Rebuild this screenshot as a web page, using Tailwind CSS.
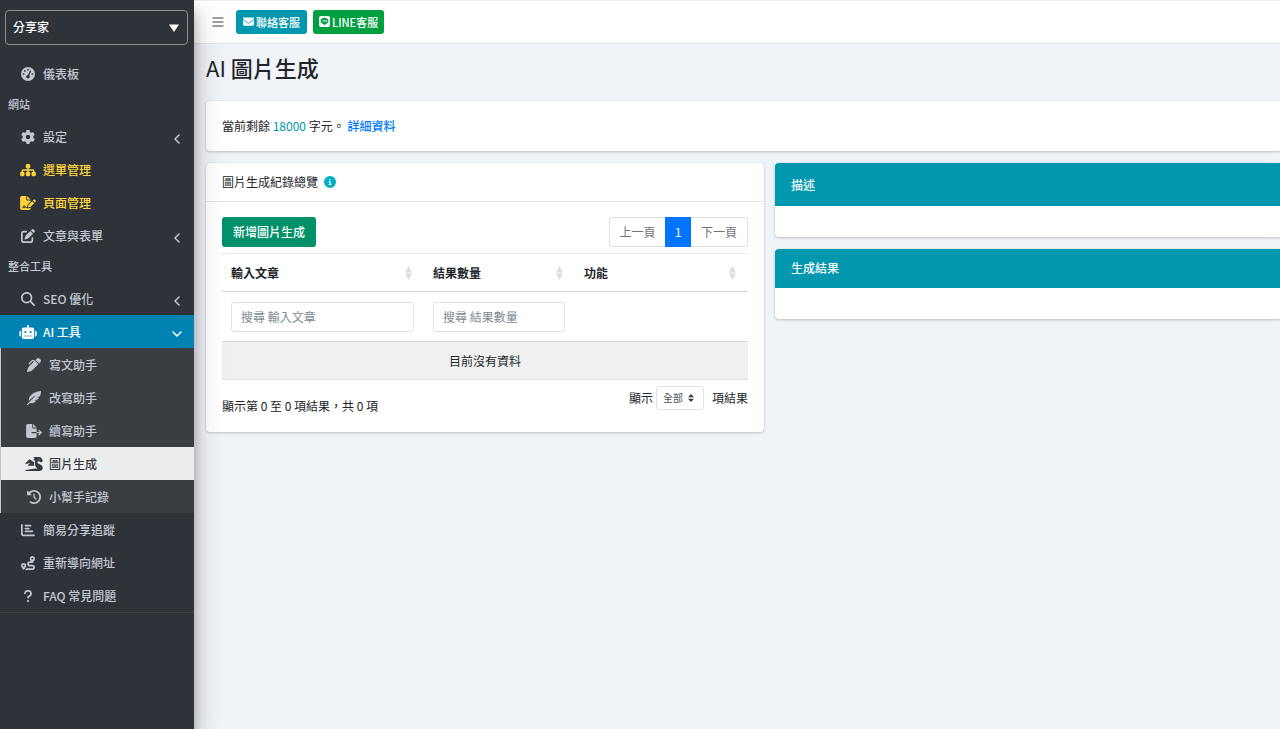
<!DOCTYPE html>
<html lang="zh-Hant">
<head>
<meta charset="utf-8">
<meta name="viewport" content="width=device-width, initial-scale=1">
<title>AI 圖片生成</title>
<script src="https://cdn.jsdelivr.net/npm/@tailwindcss/browser@4"></script>
</head>
<body class="flex min-h-screen overflow-x-hidden bg-[#f0f3f8] font-['Noto_Sans_CJK_TC',sans-serif] text-[12px] leading-5 text-[#212529]">

<!-- Sidebar -->
<aside class="relative z-10 w-[194px] shrink-0 bg-[#2e333a] font-medium text-[#c2c7d0] shadow-[0_14px_28px_rgba(0,0,0,0.25),0_10px_10px_rgba(0,0,0,0.22)]">
  <div class="pt-[10px] pr-[6px] pb-3 pl-[5px]">
    <button type="button" class="flex h-[35px] w-full items-center justify-between rounded border border-[#8a8e93] pr-2 pb-px pl-[7px] font-medium text-white">
      <span>分享家</span>
      <svg class="mt-[2px] h-2 w-[10px]" viewBox="0 0 10 8" fill="currentColor"><path d="M0 0.500h10L5 8z"/></svg>
    </button>
  </div>
  <nav class="border-b border-[#3d4247]">
    <a href="#" class="flex h-[33px] items-center gap-[7px] pr-3 pl-5">
      <svg class="h-[14px] w-4" viewBox="0 0 512 512" fill="currentColor"><path d="M0 256a256 256 0 1 1 512 0A256 256 0 1 1 0 256zM288 96a32 32 0 1 0 -64 0 32 32 0 1 0 64 0zM256 416c35.3 0 64-28.7 64-64c0-17.4-6.9-33.1-18.1-44.6L366 161.7c5.3-12.1-.2-26.3-12.3-31.6s-26.3 .2-31.6 12.3L257.9 288c-.6 0-1.3 0-1.9 0c-35.3 0-64 28.7-64 64s28.7 64 64 64zM176 144a32 32 0 1 0 -64 0 32 32 0 1 0 64 0zM96 288a32 32 0 1 0 0-64 32 32 0 1 0 0 64zm352-32a32 32 0 1 0 -64 0 32 32 0 1 0 64 0z"/></svg>
      <span>儀表板</span>
    </a>
    <h2 class="flex h-[30px] items-center pb-[2px] pl-2 text-[11px]">網站</h2>
    <a href="#" class="flex h-[33px] items-center gap-[7px] pr-3 pl-5">
      <svg class="h-[14px] w-4" viewBox="0 0 512 512" fill="currentColor"><path d="M495.9 166.6c3.2 8.7 .5 18.4-6.4 24.6l-43.3 39.4c1.1 8.3 1.7 16.8 1.7 25.4s-.6 17.1-1.7 25.4l43.3 39.4c6.9 6.2 9.6 15.9 6.4 24.6c-4.4 11.9-9.7 23.3-15.8 34.3l-4.7 8.1c-6.6 11-14 21.4-22.1 31.2c-5.9 7.2-15.7 9.6-24.5 6.8l-55.7-17.7c-13.4 10.3-28.2 18.9-44 25.4l-12.5 57.1c-2 9.1-9 16.3-18.2 17.8c-13.8 2.3-28 3.5-42.5 3.5s-28.7-1.2-42.5-3.5c-9.2-1.5-16.2-8.7-18.2-17.8l-12.5-57.1c-15.8-6.5-30.6-15.1-44-25.4L83.1 425.9c-8.8 2.8-18.6 .3-24.5-6.8c-8.1-9.8-15.5-20.2-22.1-31.2l-4.7-8.1c-6.1-11-11.4-22.4-15.8-34.3c-3.2-8.7-.5-18.4 6.4-24.6l43.3-39.4C64.6 273.1 64 264.6 64 256s.6-17.1 1.7-25.4L22.4 191.2c-6.9-6.2-9.6-15.9-6.4-24.6c4.4-11.9 9.7-23.3 15.8-34.3l4.7-8.1c6.6-11 14-21.4 22.1-31.2c5.9-7.2 15.7-9.6 24.5-6.8l55.7 17.7c13.4-10.3 28.2-18.9 44-25.4l12.5-57.1c2-9.1 9-16.3 18.2-17.8C227.3 1.2 241.5 0 256 0s28.7 1.2 42.5 3.5c9.2 1.5 16.2 8.7 18.2 17.8l12.5 57.1c15.8 6.5 30.6 15.1 44 25.4l55.7-17.7c8.8-2.8 18.6-.3 24.5 6.8c8.1 9.8 15.5 20.2 22.1 31.2l4.7 8.1c6.1 11 11.4 22.4 15.8 34.3zM256 336a80 80 0 1 0 0-160 80 80 0 1 0 0 160z"/></svg>
      <span>設定</span>
      <svg class="mt-1 ml-auto h-[10px] w-[10px]" viewBox="0 0 10 10" fill="none" stroke="currentColor" stroke-width="1.5" stroke-linecap="round" stroke-linejoin="round"><path d="M7 1L3 5l4 4"/></svg>
    </a>
    <a href="#" class="flex h-[33px] items-center gap-[7px] pr-3 pl-5 text-[#ffd43b]">
      <svg class="h-[14px] w-4" viewBox="0 0 576 512" fill="currentColor"><path d="M208 80c0-26.5 21.5-48 48-48h64c26.5 0 48 21.5 48 48v64c0 26.5-21.5 48-48 48h-8v40h152c30.9 0 56 25.1 56 56v32h8c26.5 0 48 21.5 48 48v64c0 26.5-21.5 48-48 48h-64c-26.5 0-48-21.5-48-48v-64c0-26.5 21.5-48 48-48h8v-32c0-4.4-3.6-8-8-8H312v40h8c26.5 0 48 21.5 48 48v64c0 26.5-21.5 48-48 48h-64c-26.5 0-48-21.5-48-48v-64c0-26.5 21.5-48 48-48h8v-40H112c-4.4 0-8 3.6-8 8v32h8c26.5 0 48 21.5 48 48v64c0 26.5-21.5 48-48 48H48c-26.5 0-48-21.5-48-48v-64c0-26.5 21.5-48 48-48h8v-32c0-30.9 25.1-56 56-56h152v-40h-8c-26.5 0-48-21.5-48-48V80z"/></svg>
      <span>選單管理</span>
    </a>
    <a href="#" class="flex h-[33px] items-center gap-[7px] pr-3 pl-5 text-[#ffd43b]">
      <svg class="h-[14px] w-4" viewBox="0 0 576 512" fill="currentColor"><path d="M64 0C28.7 0 0 28.7 0 64v384c0 35.3 28.7 64 64 64h256c35.3 0 64-28.7 64-64v-19.3c-2.7 1.1-5.4 2-8.2 2.7l-60.1 15c-3 .7-6 1.2-9 1.4-.9 .1-1.8 .2-2.7 .2h-64c-6.1 0-11.6-3.4-14.3-8.8l-8.800-17.7c-1.700-3.4-5.100-5.500-8.800-5.500s-7.200 2.100-8.800 5.500l-8.800 17.7c-2.900 5.900-9.200 9.400-15.7 8.800s-12.100-5.100-13.9-11.300L144 381l-9.800 32.8c-6.100 20.300-24.8 34.200-46 34.200H80c-8.800 0-16-7.200-16-16s7.200-16 16-16h8.200c7.100 0 13.3-4.6 15.3-11.4l14.9-49.5c3.4-11.3 13.8-19.1 25.6-19.1s22.2 7.8 25.6 19.1l11.6 38.6c7.4-6.2 16.8-9.7 26.8-9.7 15.9 0 30.4 9 37.5 23.2l4.4 8.800h8.900c-3.100-8.800-3.700-18.400-1.400-27.8l15-60.1c2.800-11.3 8.600-21.5 16.8-29.7L384 203.6V160H256c-17.7 0-32-14.3-32-32V0H64zm192 0v128h128L256 0zm293.8 139.7c-15.6-15.6-40.9-15.6-56.6 0l-29.4 29.4 71 71 29.4-29.4c15.6-15.6 15.6-40.9 0-56.6l-14.4-14.4zM311.9 321c-4.100 4.100-7 9.200-8.400 14.9l-15 60.1c-1.400 5.500 .2 11.2 4.200 15.2s9.700 5.600 15.2 4.200l60.1-15c5.600-1.400 10.8-4.300 14.9-8.400l129.2-129.3-71-71L311.9 321z"/></svg>
      <span>頁面管理</span>
    </a>
    <a href="#" class="flex h-[33px] items-center gap-[7px] pr-3 pl-5">
      <svg class="h-[14px] w-4" viewBox="0 0 512 512" fill="currentColor"><path d="M471.6 21.7c-21.9-21.9-57.3-21.9-79.2 0L362.3 51.7l97.9 97.9 30.1-30.1c21.9-21.9 21.9-57.3 0-79.2L471.6 21.7zm-299.2 220c-6.1 6.1-10.8 13.6-13.5 21.9l-29.6 88.8c-2.9 8.6-.6 18.1 5.8 24.6s15.9 8.7 24.6 5.8l88.8-29.6c8.2-2.7 15.7-7.4 21.9-13.5L437.7 172.3 339.7 74.3 172.4 241.7zM96 64C43 64 0 107 0 160V416c0 53 43 96 96 96H352c53 0 96-43 96-96V320c0-17.7-14.3-32-32-32s-32 14.3-32 32v96c0 17.7-14.3 32-32 32H96c-17.7 0-32-14.3-32-32V160c0-17.7 14.3-32 32-32h96c17.7 0 32-14.3 32-32s-14.3-32-32-32H96z"/></svg>
      <span>文章與表單</span>
      <svg class="mt-1 ml-auto h-[10px] w-[10px]" viewBox="0 0 10 10" fill="none" stroke="currentColor" stroke-width="1.5" stroke-linecap="round" stroke-linejoin="round"><path d="M7 1L3 5l4 4"/></svg>
    </a>
    <h2 class="flex h-[30px] items-center pb-[2px] pl-2 text-[11px]">整合工具</h2>
    <a href="#" class="flex h-[33px] items-center gap-[7px] pr-3 pl-5">
      <svg class="h-[14px] w-4" viewBox="0 0 512 512" fill="currentColor"><path d="M416 208c0 45.9-14.9 88.3-40 122.7L502.6 457.4c12.5 12.5 12.5 32.8 0 45.3s-32.8 12.5-45.3 0L330.7 376c-34.4 25.2-76.8 40-122.7 40C93.1 416 0 322.9 0 208S93.1 0 208 0S416 93.1 416 208zM208 352a144 144 0 1 0 0-288 144 144 0 1 0 0 288z"/></svg>
      <span>SEO 優化</span>
      <svg class="mt-1 ml-auto h-[10px] w-[10px]" viewBox="0 0 10 10" fill="none" stroke="currentColor" stroke-width="1.5" stroke-linecap="round" stroke-linejoin="round"><path d="M7 1L3 5l4 4"/></svg>
    </a>
    <a href="#" class="flex h-[33px] items-center gap-[7px] bg-[#0083b3] pr-3 pl-5 text-white">
      <svg class="h-[14px] w-4 scale-110" viewBox="0 0 640 512" fill="currentColor"><path d="M320 0c17.7 0 32 14.3 32 32V96H472c39.8 0 72 32.2 72 72V440c0 39.8-32.2 72-72 72H168c-39.8 0-72-32.2-72-72V168c0-39.8 32.2-72 72-72H288V32c0-17.7 14.3-32 32-32zM208 384c-8.8 0-16 7.2-16 16s7.2 16 16 16h32c8.8 0 16-7.2 16-16s-7.2-16-16-16H208zm96 0c-8.8 0-16 7.2-16 16s7.2 16 16 16h32c8.8 0 16-7.2 16-16s-7.2-16-16-16H304zm96 0c-8.8 0-16 7.2-16 16s7.2 16 16 16h32c8.8 0 16-7.2 16-16s-7.2-16-16-16H400zM264 256a40 40 0 1 0 -80 0 40 40 0 1 0 80 0zm152 40a40 40 0 1 0 0-80 40 40 0 1 0 0 80zM48 224H64V416H48c-26.5 0-48-21.5-48-48V272c0-26.5 21.5-48 48-48zm544 0c26.5 0 48 21.5 48 48v96c0 26.5-21.5 48-48 48H576V224h16z"/></svg>
      <span>AI 工具</span>
      <svg class="mt-1 ml-auto h-[10px] w-[10px]" viewBox="0 0 10 10" fill="none" stroke="currentColor" stroke-width="1.5" stroke-linecap="round" stroke-linejoin="round"><path d="M1 3l4 4 4-4"/></svg>
    </a>
    <div class="border-l border-[#c2c7d0] bg-[#393e42]">
      <a href="#" class="flex h-[33px] items-center gap-[7px] pl-[25px]">
        <svg class="h-[14px] w-4" viewBox="0 0 512 512" fill="currentColor"><path d="M453.3 19.3l39.4 39.4c25 25 25 65.5 0 90.5l-52.1 52.1-17-17-96-96-17-17 52.1-52.1c25-25 65.5-25 90.5 0zM241 114.9c-9.4-9.4-24.6-9.4-33.9 0L105 217c-9.4 9.4-24.6 9.4-33.9 0s-9.4-24.6 0-33.9L173.1 81c28.1-28.1 73.7-28.1 101.8 0L288 94.1l17 17 96 96 17 17-17 17L229.5 412.5c-48 48-109.2 80.8-175.8 94.1l-25 5c-7.9 1.6-16-.9-21.7-6.6s-8.1-13.8-6.6-21.7l5-25c13.3-66.6 46.1-127.8 94.1-175.8L254.1 128 241 114.9z"/></svg>
        <span>寫文助手</span>
      </a>
      <a href="#" class="flex h-[33px] items-center gap-[7px] pl-[25px]">
        <svg class="h-[14px] w-4" viewBox="0 0 512 512" fill="currentColor"><path d="M512 0C460.200 3.600 264.500 31 144 151.200 61.100 234 64.200 323.300 65.500 356.200L253.600 189.800c6.500-5.800 16.500-5.200 22.200 1.300 5.400 6.100 5.200 15.300-.4 21.200L7 471c-9.400 9.400-9.400 24.600 0 33.900 9.400 9.400 24.600 9.400 33.900 0l62-62c51.200 10.500 125.100 7.100 190.500-40.300L352 352h-90l150-58c12-14 24-31 34-50l-86-4 112-44C505 112 511 38 512 0z"/></svg>
        <span>改寫助手</span>
      </a>
      <a href="#" class="flex h-[33px] items-center gap-[7px] pl-[25px]">
        <svg class="h-[14px] w-4" viewBox="0 0 576 512" fill="currentColor"><path d="M0 64C0 28.7 28.7 0 64 0H224V128c0 17.7 14.3 32 32 32H384V288H216c-13.3 0-24 10.7-24 24s10.7 24 24 24H384V448c0 35.3-28.7 64-64 64H64c-35.3 0-64-28.7-64-64V64zM384 336V288H494.1l-39-39c-9.4-9.4-9.4-24.6 0-33.9s24.6-9.4 33.9 0l80 80c9.4 9.4 9.4 24.6 0 33.9l-80 80c-9.4 9.4-24.6 9.4-33.9 0s-9.4-24.6 0-33.9l39-39H384zm0-208H256V0L384 128z"/></svg>
        <span>續寫助手</span>
      </a>
      <a href="#" class="flex h-[33px] items-center gap-[7px] bg-[#ebeced] pl-[25px] text-[#343a40]">
        <svg class="h-[14px] w-4 scale-110" viewBox="0 0 640 512" fill="currentColor"><path d="M18.32 255.78L192 223.96l-91.28 68.69c-10.08 10.08-2.94 27.31 11.31 27.31h222.7c-9.44-26.4-14.73-54.47-14.73-83.38v-42.27l-119.73-87.6c-23.82-15.88-55.29-14.01-77.06 4.59L5.81 227.64c-12.38 10.33-3.45 30.42 12.51 28.14zm556.87 34.1l-100.66-50.31A47.992 47.992 0 0 1 448 196.65v-36.69h64l28.09 22.63c6 6 14.14 9.37 22.63 9.37h30.97a32 32 0 0 0 28.62-17.69l14.31-28.62a32.005 32.005 0 0 0-3.02-33.51l-74.53-99.38C553.02 4.7 543.54 0 533.47 0H296.02c-7.13 0-10.7 8.57-5.66 13.61L352 63.96 292.42 88.8c-5.9 2.95-5.9 11.36 0 14.31L352 127.96v108.62c0 72.08 36.03 139.39 96 179.38-195.59 6.81-344.56 41.01-434.1 60.91C5.78 478.67 0 485.88 0 494.2 0 504 7.95 512 17.76 512h499.08c63.29.01 119.61-47.56 122.99-110.76 2.52-47.28-22.73-90.4-64.64-111.36zM489.18 66.25l45.65 11.41c-2.75 10.91-12.47 18.89-24.13 18.26-12.96-.71-25.85-12.53-21.52-29.67z"/></svg>
        <span>圖片生成</span>
      </a>
      <a href="#" class="flex h-[33px] items-center gap-[7px] pl-[25px]">
        <svg class="h-[14px] w-4" viewBox="0 0 512 512" fill="currentColor"><path d="M75 75L41 41C25.9 25.9 0 36.6 0 57.9V168c0 13.3 10.7 24 24 24H134.1c21.4 0 32.1-25.9 17-41l-30.8-30.8C155 85.5 203 64 256 64c106 0 192 86 192 192s-86 192-192 192c-40.8 0-78.6-12.7-109.7-34.4c-14.5-10.1-34.4-6.6-44.6 7.9s-6.6 34.4 7.9 44.6C151.2 495 201.7 512 256 512c141.4 0 256-114.6 256-256S397.4 0 256 0C185.3 0 121.3 28.7 75 75zm181 53c-13.3 0-24 10.7-24 24V256c0 6.4 2.5 12.5 7 17l72 72c9.4 9.4 24.6 9.4 33.9 0s9.4-24.6 0-33.9l-65-65V152c0-13.3-10.7-24-24-24z"/></svg>
        <span>小幫手記錄</span>
      </a>
    </div>
    <a href="#" class="flex h-[33px] items-center gap-[7px] pr-3 pl-5">
      <svg class="h-[14px] w-4" viewBox="0 0 512 512" fill="currentColor"><path d="M32 32c17.7 0 32 14.3 32 32V400c0 8.8 7.2 16 16 16H480c17.7 0 32 14.3 32 32s-14.3 32-32 32H80c-44.2 0-80-35.8-80-80V64C0 46.3 14.3 32 32 32zm96 64c0-17.7 14.3-32 32-32l192 0c17.7 0 32 14.3 32 32s-14.3 32-32 32l-192 0c-17.7 0-32-14.3-32-32zm32 74H288c17.7 0 32 14.3 32 32s-14.3 32-32 32H160c-17.7 0-32-14.3-32-32s14.3-32 32-32zm0 108H416c17.7 0 32 14.3 32 32s-14.3 32-32 32H160c-17.7 0-32-14.3-32-32s14.3-32 32-32z"/></svg>
      <span>簡易分享追蹤</span>
    </a>
    <a href="#" class="flex h-[33px] items-center gap-[7px] pr-3 pl-5">
      <svg class="h-[14px] w-4" viewBox="0 0 512 512" fill="currentColor"><path d="M512 96c0 50.2-59.1 125.1-84.6 155c-3.8 4.4-9.4 6.1-14.5 5H320c-17.7 0-32 14.3-32 32s14.3 32 32 32h96c53 0 96 43 96 96s-43 96-96 96H139.6c8.7-9.9 19.3-22.6 30-36.8c6.3-8.4 12.8-17.6 19-27.2H416c17.7 0 32-14.3 32-32s-14.3-32-32-32H320c-53 0-96-43-96-96s43-96 96-96h39.8c-21-31.5-39.8-67.7-39.8-96c0-53 43-96 96-96s96 43 96 96zM117.1 489.1c-3.8 4.3-7.2 8.1-10.1 11.3l-1.8 2-.2-.2c-6 4.6-14.6 4-20-1.8C59.8 473 0 402.5 0 352c0-53 43-96 96-96s96 43 96 96c0 30-21.1 67-43.5 97.9c-10.7 14.7-21.7 28-30.8 38.5l-.6 .7zM128 352a32 32 0 1 0 -64 0 32 32 0 1 0 64 0zM416 128a32 32 0 1 0 0-64 32 32 0 1 0 0 64z"/></svg>
      <span>重新導向網址</span>
    </a>
    <a href="#" class="flex h-[33px] items-center gap-[7px] pr-3 pl-5">
      <svg class="h-[14px] w-4" viewBox="0 0 320 512" fill="currentColor"><path d="M80 160c0-35.3 28.7-64 64-64h32c35.3 0 64 28.7 64 64v3.6c0 21.8-11.1 42.1-29.4 53.8l-42.2 27.1c-25.2 16.2-40.4 44.1-40.4 74V320c0 17.7 14.3 32 32 32s32-14.3 32-32v-1.4c0-8.2 4.2-15.8 11-20.2l42.2-27.1c36.6-23.6 58.8-64.1 58.8-107.7V160c0-70.7-57.3-128-128-128H144C73.3 32 16 89.3 16 160c0 17.7 14.3 32 32 32s32-14.3 32-32zm80 320a40 40 0 1 0 0-80 40 40 0 1 0 0 80z"/></svg>
      <span>FAQ 常見問題</span>
    </a>
  </nav>
</aside>

<div class="min-w-0 flex-1">
  <!-- Top bar -->
  <header class="flex h-11 items-center gap-[6px] border-y border-t-[#f0f0f0] border-b-[#e3e6ea] bg-white pl-[18px] text-[11px] font-medium text-white">
    <button type="button" aria-label="選單" class="mr-[6px] text-[#808080]">
      <svg class="block h-3 w-3" viewBox="0 0 12 12" fill="none" stroke="currentColor" stroke-width="1.3"><path d="M0.5 2h11M0.5 6h11M0.5 10h11"/></svg>
    </button>
    <a href="#" class="flex h-6 items-center gap-[2px] rounded-[3px] bg-[#0097af] px-[7px] pb-px">
      <svg class="h-[11px] w-[11px]" viewBox="0 0 512 512" fill="currentColor"><path d="M48 64C21.5 64 0 85.5 0 112c0 15.1 7.1 29.3 19.2 38.4L236.8 313.6c11.4 8.5 27 8.5 38.4 0L492.8 150.4c12.1-9.1 19.2-23.3 19.2-38.4c0-26.5-21.5-48-48-48H48zM0 176V384c0 35.3 28.7 64 64 64H448c35.3 0 64-28.7 64-64V176L294.4 339.2c-22.8 17.1-54 17.1-76.8 0L0 176z"/></svg>
      <span>聯絡客服</span>
    </a>
    <a href="#" class="flex h-6 items-center gap-[2px] rounded-[3px] bg-[#009f41] px-[6px] pb-px">
      <svg class="h-[11px] w-[11px]" viewBox="0 0 22 22"><rect width="22" height="22" rx="4" fill="#fff"/><path d="M11 3.500c-4.600 0-8 2.900-8 6.500 0 3.200 2.800 5.800 6.600 6.300.9.200.7.800.5 2.200 2.500-1.200 8.900-4.700 8.900-8.500 0-3.600-3.400-6.500-8-6.500z" fill="#009f41"/><path d="M6 8.300v3h1.800M9 8.300v3M10.500 11.300v-3l2 3v-3M16 8.300h-1.900v3H16M14.100 9.800H16" fill="none" stroke="#fff" stroke-width=".9"/></svg>
      <span>LINE客服</span>
    </a>
  </header>

  <main class="pl-3">
    <h1 class="flex h-[57px] items-center pb-3 text-[22px] leading-7 font-medium"><span><span class="font-normal">AI</span> 圖片生成</span></h1>

    <section class="mb-3 rounded-l bg-white px-4 py-[15px] shadow-[0_0_1px_rgba(0,0,0,0.13),0_1px_3px_rgba(0,0,0,0.2)]">
      <p>當前剩餘 <span class="text-[#0097a7]">18000</span> 字元。 <a href="#" class="font-medium text-[#007bff]">詳細資料</a></p>
    </section>

    <div class="grid grid-cols-[558px_minmax(0,1fr)] items-start gap-[11px]">
      <!-- Records card -->
      <section class="rounded bg-white shadow-[0_0_1px_rgba(0,0,0,0.13),0_1px_3px_rgba(0,0,0,0.2)]">
        <header class="flex h-[39px] items-center gap-[6px] border-b border-[#e4e6e8] px-4">
          <h2>圖片生成紀錄總覽</h2>
          <svg class="h-3 w-3 text-[#00aec5]" viewBox="0 0 512 512" fill="currentColor"><path d="M256 512A256 256 0 1 0 256 0a256 256 0 1 0 0 512zM216 336h24V272H216c-13.3 0-24-10.7-24-24s10.7-24 24-24h48c13.3 0 24 10.7 24 24v88h8c13.3 0 24 10.7 24 24s-10.7 24-24 24H216c-13.3 0-24-10.7-24-24s10.7-24 24-24zm40-208a32 32 0 1 1 0 64 32 32 0 1 1 0-64z"/></svg>
        </header>
        <div class="px-4 pt-[15px] pb-4">
          <div class="mb-[6px] flex h-[30px] items-center justify-between">
            <button type="button" class="h-[30px] rounded-[3px] bg-[#00916a] px-[11px] pb-px font-medium text-white">新增圖片生成</button>
            <div class="flex h-[30px] text-[#6c757d]">
              <button type="button" class="w-14 rounded-l-[3px] border border-r-0 border-[#dee2e6] pb-px">上一頁</button>
              <button type="button" class="w-[26px] bg-[#0073ff] pb-px text-white">1</button>
              <button type="button" class="w-[57px] rounded-r-[3px] border border-l-0 border-[#dee2e6] pb-px">下一頁</button>
            </div>
          </div>
          <table class="w-full table-fixed border-collapse">
            <colgroup><col class="w-[202px]"><col class="w-[151px]"><col></colgroup>
            <thead>
              <tr class="h-[38px] border-t border-b border-t-[#e9ecef] border-b-[#d4d8dc] text-left">
                <th scope="col" class="pr-3 pl-[9px] font-bold"><div class="flex items-center justify-between">輸入文章<svg class="h-[14px] w-[7px] text-[#dcdcdc]" viewBox="0 0 7 14" fill="currentColor"><path d="M0 6.500L3.500 0 7 6.500zM0 7.500h7L3.500 14z"/></svg></div></th>
                <th scope="col" class="pr-3 pl-[9px] font-bold"><div class="flex items-center justify-between">結果數量<svg class="h-[14px] w-[7px] text-[#dcdcdc]" viewBox="0 0 7 14" fill="currentColor"><path d="M0 6.500L3.500 0 7 6.500zM0 7.500h7L3.500 14z"/></svg></div></th>
                <th scope="col" class="pr-3 pl-[9px] font-bold"><div class="flex items-center justify-between">功能<svg class="h-[14px] w-[7px] text-[#dcdcdc]" viewBox="0 0 7 14" fill="currentColor"><path d="M0 6.500L3.500 0 7 6.500zM0 7.500h7L3.500 14z"/></svg></div></th>
              </tr>
              <tr class="h-[50px] border-b border-[#d4d8dc]">
                <td class="pr-[10px] pl-[9px]"><input type="text" aria-label="搜尋 輸入文章" placeholder="搜尋 輸入文章" class="block h-[30px] w-full rounded-[3px] border border-[#dee2e6] px-[9px] placeholder:text-[#808890]"></td>
                <td class="pr-[10px] pl-[9px]"><input type="text" aria-label="搜尋 結果數量" placeholder="搜尋 結果數量" class="block h-[30px] w-full rounded-[3px] border border-[#dee2e6] px-[9px] placeholder:text-[#808890]"></td>
                <td></td>
              </tr>
            </thead>
            <tbody>
              <tr class="h-[38px] border-b border-[#dee2e6] bg-[#f0f0f0]"><td colspan="3" class="text-center">目前沒有資料</td></tr>
            </tbody>
          </table>
          <div class="flex items-start justify-between pt-[6px]">
            <p class="pt-[10px]">顯示第 0 至 0 項結果，共 0 項</p>
            <label class="flex items-center">顯示
              <span class="relative mr-2 ml-[3px] block">
                <select class="block h-6 w-12 appearance-none rounded-[3px] border border-[#dee2e6] bg-white pl-[6px] text-[10px] text-[#495057]"><option>全部</option></select>
                <svg class="pointer-events-none absolute top-2 right-[10px] h-2 w-[6px] text-[#343a40]" viewBox="0 0 6 8" fill="currentColor"><path d="M0 3.300L3 0l3 3.300zM0 4.700h6L3 8z"/></svg>
              </span>
              項結果
            </label>
          </div>
        </div>
      </section>

      <!-- Result panels -->
      <div class="flex flex-col gap-3">
        <section class="overflow-hidden rounded-l bg-white shadow-[0_0_1px_rgba(0,0,0,0.13),0_1px_3px_rgba(0,0,0,0.2)]">
          <h2 class="flex h-[43px] items-center bg-[#0097af] px-4 font-medium text-white">描述</h2>
          <div class="h-[31px]"></div>
        </section>
        <section class="overflow-hidden rounded-l bg-white shadow-[0_0_1px_rgba(0,0,0,0.13),0_1px_3px_rgba(0,0,0,0.2)]">
          <h2 class="flex h-[39px] items-center bg-[#0097af] px-4 pb-px font-medium text-white">生成結果</h2>
          <div class="h-[31px]"></div>
        </section>
      </div>
    </div>
  </main>
</div>
</body>
</html>
